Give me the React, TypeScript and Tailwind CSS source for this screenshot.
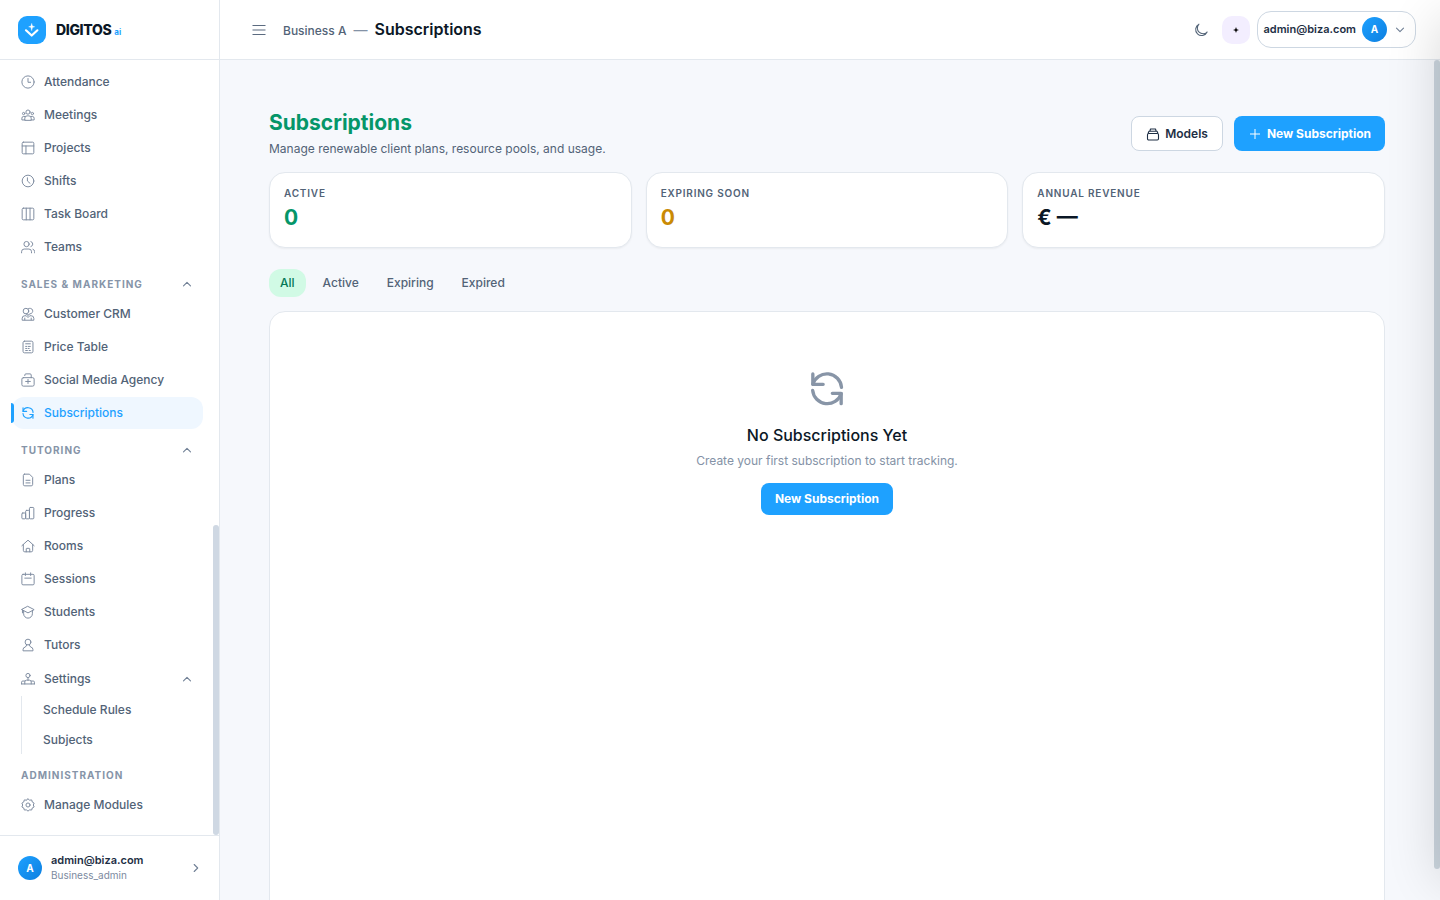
import { useState } from 'react'
import type { ReactNode } from 'react'
import clsx from 'clsx'

const icons: Record<string, ReactNode> = {
  attendance: (
    <>
      <circle cx="12" cy="12" r="10.5" />
      <path d="M12 6v6.5h4.5" />
    </>
  ),
  meetings: (
    <>
      <circle cx="12" cy="7" r="3.6" />
      <circle cx="4.5" cy="9.5" r="2" />
      <circle cx="19.5" cy="9.5" r="2" />
      <path d="M6.5 20.500v-3a4 4 0 0 1 4-4h3a4 4 0 0 1 4 4v3zM6.500 20.500H1.500v-3a3 3 0 0 1 3-3H7M17.500 20.500h5v-3a3 3 0 0 0-3-3H17" />
    </>
  ),
  projects: (
    <>
      <rect x="2" y="2" width="20" height="20" rx="2" />
      <path d="M2 8.5h20M8.5 8.500V22" />
    </>
  ),
  shifts: (
    <>
      <circle cx="12" cy="12" r="10" />
      <path d="M11 6.500v5.500l4.500 4" />
    </>
  ),
  board: (
    <>
      <rect x="2" y="2" width="20" height="20" rx="2" />
      <path d="M9 2v20M15.500 2v20" />
    </>
  ),
  teams: (
    <>
      <circle cx="9.500" cy="7" r="4.500" />
      <path d="M1 22v-2a4.500 4.500 0 0 1 4.500-4.500h8A4.500 4.500 0 0 1 18 20v2M17 2.700a4.500 4.500 0 0 1 0 8.600M20.500 15.800A4.500 4.500 0 0 1 23.500 20v2" />
    </>
  ),
  crm: (
    <>
      <circle cx="8.500" cy="7" r="4.800" />
      <path d="M12.500 3a4.800 4.800 0 1 1 3 8.700L12 14M2 22v-2.500A4.500 4.500 0 0 1 6.500 15H9l3 3 3-3h2.500a4.500 4.500 0 0 1 4.500 4.500V22zM8.500 11.800 12 14M6.500 22v-3M17.500 22v-3" />
    </>
  ),
  price: (
    <>
      <rect x="3.500" y="2" width="17" height="20" rx="2.500" />
      <path d="M8 6.500h8M8 11h2M12.500 11H16M8 14.500h2M12.500 14.500H14M8 18h3M14 18h2" />
    </>
  ),
  social: (
    <>
      <rect x="1.500" y="8" width="21" height="14.500" rx="2.500" />
      <path d="M6.500 4.500v-1a2 2 0 0 1 2-2h7a2 2 0 0 1 2 2V8M12 11v7M8 14.500h8" />
    </>
  ),
  sync: (
    <>
      <path d="M3.500 3v6.200h6.200M20.500 20.800v-6.200h-5.300" />
      <path d="M3.500 9.200A8.800 8.800 0 0 1 20.700 11M20.500 14.800A8.800 8.800 0 0 1 3.400 12.800" />
    </>
  ),
  plans: (
    <>
      <path d="M6 2h8.500L20 7.500v12a2.500 2.500 0 0 1-2.500 2.500h-11A2.500 2.500 0 0 1 4 19.500V4a2 2 0 0 1 2-2z" />
      <path d="M8.500 12.500h7M8.500 17h7" />
    </>
  ),
  progress: (
    <>
      <rect x="1.500" y="12" width="6.500" height="10" rx="1.500" />
      <rect x="8" y="7.500" width="6.500" height="14.500" rx="1.500" />
      <rect x="14.500" y="2.500" width="7.500" height="19.500" rx="1.500" />
    </>
  ),
  rooms: (
    <>
      <path d="M1.500 11.500 12 2l10.500 9.500M4 9.500v10A2.500 2.500 0 0 0 6.500 22h11a2.500 2.500 0 0 0 2.500-2.500v-10" />
      <path d="M9 22v-5a1 1 0 0 1 1-1h4a1 1 0 0 1 1 1v5" />
    </>
  ),
  sessions: (
    <>
      <rect x="1.500" y="4" width="21" height="18" rx="2" />
      <path d="M7.500 1.500V6M16.500 1.500V6M6.500 10.500h11" />
    </>
  ),
  students: (
    <>
      <path d="M12 2.500 22.500 8 12 13.500 1.500 8zM2.500 8.500v5" />
      <path d="M4.500 10v5a7.500 7.500 0 0 0 15 0v-5" />
    </>
  ),
  tutors: (
    <>
      <circle cx="12" cy="7" r="5" />
      <path d="M10 11.800 7.500 15.500A4.500 4.500 0 0 0 3.500 20v2h17v-2a4.500 4.500 0 0 0-4-4.500L14 11.800" />
    </>
  ),
  settings: (
    <>
      <circle cx="12" cy="6" r="3.600" />
      <path d="M12 9.500V14M6.500 20.500V17a3 3 0 0 1 3-3h5a3 3 0 0 1 3 3v3.500M1 20.500v-3a2 2 0 0 1 2-2h3.500M23 20.500v-3a2 2 0 0 0-2-2h-3.500M1 20.500h22" />
    </>
  ),
  modules: (
    <>
      <circle cx="12" cy="12" r="3.500" />
      <path d="M12 1.500l2.700 2.200 3.700-.4.900 3.600 3.200 1.900-1.400 3.200 1.400 3.400-3.200 1.700-1 3.500-3.600-.2L12 22.500l-2.700-2.100-3.600.2-1-3.500-3.200-1.700 1.400-3.400-1.400-3.200 3.200-1.900.9-3.600 3.700.4z" />
    </>
  ),
}

function Icon({ name, className, strokeWidth = 1.7 }: { name: string; className: string; strokeWidth?: number }) {
  return (
    <svg
      viewBox="0 0 24 24"
      fill="none"
      stroke="currentColor"
      strokeWidth={strokeWidth}
      strokeLinecap="round"
      strokeLinejoin="round"
      className={className}
      aria-hidden="true"
    >
      {icons[name]}
    </svg>
  )
}

function Chevron({ className }: { className?: string }) {
  return (
    <svg viewBox="0 0 10 10" fill="none" stroke="currentColor" strokeLinecap="round" strokeLinejoin="round" className={clsx('size-[10px] flex-none', className)} aria-hidden="true">
      <path d="M1.500 6.800 5 3.300l3.500 3.500" strokeWidth="1.100" />
    </svg>
  )
}

const work = [
  { name: 'Attendance', icon: 'attendance' },
  { name: 'Meetings', icon: 'meetings' },
  { name: 'Projects', icon: 'projects' },
  { name: 'Shifts', icon: 'shifts' },
  { name: 'Task Board', icon: 'board' },
  { name: 'Teams', icon: 'teams' },
]

const sales = [
  { name: 'Customer CRM', icon: 'crm' },
  { name: 'Price Table', icon: 'price' },
  { name: 'Social Media Agency', icon: 'social' },
  { name: 'Subscriptions', icon: 'sync' },
]

const tutoring = [
  { name: 'Plans', icon: 'plans' },
  { name: 'Progress', icon: 'progress' },
  { name: 'Rooms', icon: 'rooms' },
  { name: 'Sessions', icon: 'sessions' },
  { name: 'Students', icon: 'students' },
  { name: 'Tutors', icon: 'tutors' },
]

const stats = [
  { label: 'Active', value: '0', color: 'text-[#059669]' },
  { label: 'Expiring soon', value: '0', color: 'text-[#ca8a04]' },
  { label: 'Annual revenue', value: '€ —', color: 'text-[#0b1726]' },
]

const filters = ['All', 'Active', 'Expiring', 'Expired']

function NavList({ items }: { items: { name: string; icon: string }[] }) {
  return (
    <ul>
      {items.map((item) => {
        const active = item.name === 'Subscriptions'
        return (
          <li key={item.name} className="relative mb-px">
            {active && <span className="absolute -left-px top-1.5 h-5 w-[3px] rounded-r bg-[#1ea1ff]" />}
            <a
              href="#"
              aria-current={active ? 'page' : undefined}
              className={clsx(
                'flex h-8 items-center gap-[9px] rounded-xl pl-[9px] text-xs font-medium',
                active ? 'bg-[#eff7ff] text-[#1ea1ff]' : 'text-[#526377]'
              )}
            >
              <Icon name={item.icon} className={clsx('size-[14px]', !active && 'text-[#7f8da1]')} strokeWidth={active ? 2 : 1.7} />
              {item.name}
            </a>
          </li>
        )
      })}
    </ul>
  )
}

function NavLabel({ children, collapsible = true }: { children: ReactNode; collapsible?: boolean }) {
  const style = 'mt-3 mb-[5px] flex h-[18px] w-full items-center justify-between pl-[9px] pr-[11px] text-[10px] font-bold uppercase tracking-[1px] text-[#8694a8]'
  if (!collapsible) return <h2 className={style}>{children}</h2>
  return (
    <button type="button" aria-expanded="true" className={style}>
      {children}
      <Chevron className="text-[#718096]" />
    </button>
  )
}

function Sidebar() {
  return (
    <aside className="relative flex w-[220px] flex-none flex-col border-r border-[#e3e8ee] bg-white">
      <div className="flex h-[60px] flex-none items-center border-b border-[#e3e8ee] pl-[18px]">
        <svg viewBox="0 0 28 28" className="size-7" aria-hidden="true">
          <rect width="28" height="28" rx="9" fill="#1ea1ff" />
          <path d="M8 14.300l5.700 5.200 5.700-5.200" fill="none" stroke="#fff" strokeWidth="2.200" strokeLinecap="round" strokeLinejoin="round" />
          <path d="M13.700 7.300l.8 2.700 2.300.8-2.300.8-.8 3.200-.8-3.200-2.300-.8 2.300-.8z" fill="#fff" stroke="#fff" strokeWidth=".3" />
        </svg>
        <span className="ml-2.5 text-sm font-extrabold tracking-tight text-[#0b1726]">DIGITOS</span>
        <span className="ml-[3px] pt-1 text-[8px] font-bold text-[#1ea1ff]">ai</span>
      </div>

      <nav className="relative min-h-0 flex-1 overflow-hidden pt-1.5 pl-3 pr-4">
        <NavList items={work} />
        <NavLabel>Sales &amp; Marketing</NavLabel>
        <NavList items={sales} />
        <NavLabel>Tutoring</NavLabel>
        <NavList items={tutoring} />
        <button type="button" aria-expanded="true" className="flex h-[34px] w-full items-center gap-[9px] pl-[9px] pr-[11px] text-xs font-medium text-[#526377]">
          <Icon name="settings" className="size-[14px] text-[#7f8da1]" />
          Settings
          <Chevron className="ml-auto text-[#718096]" />
        </button>
        <ul className="mb-px ml-[9px] flex flex-col gap-0.5 border-l border-[#e3e8ee] pl-[21px] text-xs font-medium text-[#526377]">
          <li><a href="#" className="flex h-7 items-center">Schedule Rules</a></li>
          <li><a href="#" className="flex h-7 items-center">Subjects</a></li>
        </ul>
        <NavLabel collapsible={false}>Administration</NavLabel>
        <NavList items={[{ name: 'Manage Modules', icon: 'modules' }]} />
        <span className="absolute bottom-0 right-0 h-2/5 w-1.5 rounded-full bg-[#cfd8e3]" />
      </nav>

      <button type="button" className="flex h-[65px] flex-none items-center border-t border-[#e3e8ee] px-[18px] text-left">
        <span className="flex size-6 items-center justify-center rounded-full bg-linear-to-br from-[#1ea1ff] to-[#0d7fe0] text-[10px] font-bold text-white">A</span>
        <span className="ml-[9px] flex flex-col">
          <span className="text-[11px] leading-[15px] font-semibold text-[#1e2f45]">admin@biza.com</span>
          <span className="text-[10px] leading-[15px] text-[#7c8aa0]">Business_admin</span>
        </span>
        <Chevron className="ml-auto rotate-90 text-[#718096]" />
      </button>
    </aside>
  )
}

function Topbar() {
  return (
    <header className="flex h-[60px] flex-none items-center border-b border-[#e3e8ee] bg-white pl-8 pr-6">
      <button type="button" aria-label="Toggle menu" className="text-[#5b6b80]">
        <svg viewBox="0 0 14 12" fill="none" stroke="currentColor" className="h-3 w-3.5">
          <path d="M.5 1.500h13M.5 6h13M.5 10.500h13" strokeWidth="1.200" />
        </svg>
      </button>
      <div className="ml-[17px] flex items-baseline gap-[7px] pb-0.5 text-xs text-[#526377]">
        <span className="font-medium">Business A</span>
        <span className="text-sm text-[#8492a6]">—</span>
        <span className="text-base font-semibold text-[#0b1726]">Subscriptions</span>
      </div>

      <div className="ml-auto flex items-center">
        <button type="button" aria-label="Dark mode" className="mr-3.5 text-[#526377]">
          <svg viewBox="0 0 24 24" fill="none" stroke="currentColor" strokeWidth="1.800" strokeLinejoin="round" className="size-3.5">
            <path d="M8.500 2A10.300 10.300 0 1 0 22.500 15.500 9.500 9.500 0 0 1 8.500 2z" />
          </svg>
        </button>
        <button type="button" aria-label="Assistant" className="mr-[7px] flex size-7 items-center justify-center rounded-[10px] bg-[#f3eeff] text-black">
          <svg viewBox="0 0 8 8" fill="currentColor" className="size-2">
            <path d="M4 1l.8 2.200L7 4l-2.200.8L4 7l-.8-2.200L1 4l2.200-.8z" />
          </svg>
        </button>
        <button type="button" className="flex h-[37px] items-center rounded-[14px] border border-[#cdd7e2] pl-1.5 pr-2.5">
          <span className="text-[11px] font-semibold text-[#1e2f45]">admin@biza.com</span>
          <span className="ml-1.5 mr-2 flex size-[25px] items-center justify-center rounded-full bg-linear-to-br from-[#1ea1ff] to-[#0d7fe0] text-[10px] font-bold text-white">A</span>
          <Chevron className="rotate-180 text-[#718096]" />
        </button>
      </div>
    </header>
  )
}

export default function App() {
  const [filter, setFilter] = useState('All')

  return (
    <div className="relative flex h-screen overflow-hidden bg-[#f6f8fc] font-['Inter',sans-serif]">
      <Sidebar />

      <div className="flex min-w-0 flex-1 flex-col">
        <Topbar />

        <main className="relative flex min-h-0 flex-1 flex-col overflow-hidden pt-[47px] pl-[49px] pr-[55px]">
          <div className="flex flex-none items-center justify-between">
            <div>
              <h1 className="text-[21px] leading-[31px] font-bold text-[#059669]">Subscriptions</h1>
              <p className="text-xs leading-[22px] text-[#526377]">Manage renewable client plans, resource pools, and usage.</p>
            </div>
            <div className="flex gap-[11px] text-xs">
              <button type="button" className="flex h-[35px] items-center gap-[5px] rounded-lg border border-[#cdd7e2] bg-white px-3.5 font-semibold text-[#1e2f45]">
                <svg viewBox="0 0 14 14" fill="none" stroke="currentColor" strokeWidth="1.100" strokeLinejoin="round" className="size-3.5">
                  <rect x="1.500" y="6.500" width="11" height="6.500" rx="1.200" />
                  <path d="M2 6.500l1-2.200h8l1 2.200M3.800 4.300l.7-2.300h5l.7 2.300" />
                </svg>
                Models
              </button>
              <button type="button" className="flex h-[35px] items-center gap-[5px] rounded-lg bg-[#1ea1ff] px-3.5 font-bold text-white">
                <svg viewBox="0 0 14 14" fill="none" stroke="currentColor" strokeWidth="1" className="size-3.5">
                  <path d="M7 2v10M2 7h10" />
                </svg>
                New Subscription
              </button>
            </div>
          </div>

          <dl className="mt-3 grid flex-none grid-cols-3 gap-3.5">
            {stats.map((stat) => (
              <div key={stat.label} className="h-[76px] rounded-2xl border border-[#e3e8ee] bg-white px-3.5 pt-3 shadow-xs">
                <dt className="text-[10px] leading-4 font-semibold uppercase tracking-[0.8px] text-[#526377]">{stat.label}</dt>
                <dd className={clsx('mt-0.5 text-[21px] leading-[30px] font-bold', stat.color)}>{stat.value}</dd>
              </div>
            ))}
          </dl>

          <div className="mt-[21px] flex flex-none gap-1.5">
            {filters.map((name) => (
              <button
                key={name}
                type="button"
                aria-pressed={filter === name}
                onClick={() => setFilter(name)}
                className={clsx(
                  'h-7 rounded-xl px-[11px] text-xs font-medium',
                  filter === name ? 'bg-[#d1fae5] text-[#047857]' : 'text-[#526377]'
                )}
              >
                {name}
              </button>
            ))}
          </div>

          <section className="mt-3.5 flex min-h-[640px] flex-none flex-col items-center rounded-2xl border border-[#e3e8ee] bg-white pt-[57px]">
            <Icon name="sync" className="size-10 text-[#8895a7]" strokeWidth={2} />
            <h2 className="mt-3.5 text-base leading-6 font-medium text-[#0b1726]">No Subscriptions Yet</h2>
            <p className="mt-1 text-xs leading-5 text-[#8492a6]">Create your first subscription to start tracking.</p>
            <button type="button" className="mt-3 h-8 rounded-lg bg-[#1ea1ff] px-3.5 text-xs font-bold text-white">
              New Subscription
            </button>
          </section>

          <span className="absolute top-0 right-0 bottom-[31px] w-1.5 rounded-full bg-[#cbd5de]" />
        </main>
      </div>

      {/* Collapsed assistant drawer, only its shadow reaches the page */}
      <div className="pointer-events-none absolute inset-y-5 left-full w-80 shadow-[0_0_50px_rgba(0,0,0,0.16)]" />
    </div>
  )
}
